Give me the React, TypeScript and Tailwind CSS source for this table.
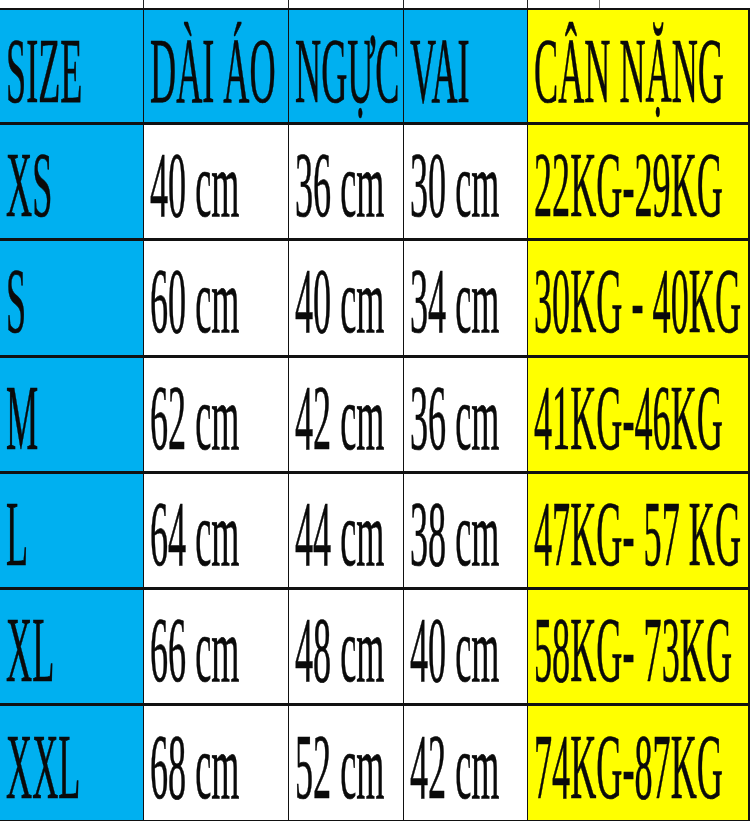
const BLUE = "bg-[#00b0f0]";
const YELLOW = "bg-[#ffff00]";

const rows = [
  { size: "XS", dai: "40 cm", nguc: "36 cm", vai: "30 cm", kg: "22KG-29KG" },
  { size: "S", dai: "60 cm", nguc: "40 cm", vai: "34 cm", kg: "30KG - 40KG" },
  { size: "M", dai: "62 cm", nguc: "42 cm", vai: "36 cm", kg: "41KG-46KG" },
  { size: "L", dai: "64 cm", nguc: "44 cm", vai: "38 cm", kg: "47KG- 57 KG" },
  { size: "XL", dai: "66 cm", nguc: "48 cm", vai: "40 cm", kg: "58KG- 73KG" },
  { size: "XXL", dai: "68 cm", nguc: "52 cm", vai: "42 cm", kg: "74KG-87KG" },
];

const gridCols = "grid grid-cols-[144px_145px_115px_124px_222px]";

function Cell({
  text,
  bg,
  last,
  head,
}: {
  text: string;
  bg: string;
  last?: boolean;
  head?: boolean;
}) {
  return (
    <div
      className={`${bg} ${last ? "border-r-2" : "border-r"} ${
        head ? "pt-[8px]" : "pt-[5px]"
      } border-[#111] flex items-center pl-[6px] overflow-hidden`}
    >
      <span className="inline-block origin-left scale-x-[0.385] whitespace-nowrap text-[94px] leading-none text-[#0a0a0a] [-webkit-text-stroke:0.7px_#0a0a0a]">
        {text}
      </span>
    </div>
  );
}

export default function App() {
  return (
    <div className="w-[750px] h-[821px] overflow-hidden bg-white font-['Liberation_Serif','Times_New_Roman',serif]">
      {/* top sliver of the previous table */}
      <div className="grid grid-cols-[144px_145px_115px_124px_72px_150px] h-[8px]">
        <div className="border-r border-[#222]" />
        <div className="border-r border-[#222]" />
        <div className="border-r border-[#222]" />
        <div className="border-r border-[#222]" />
        <div className="border-r border-[#777]" />
        <div />
      </div>

      <div className="border-t-2 border-[#111]">
        {/* header */}
        <div className={`${gridCols} h-[115px] border-b-[3px] border-[#111]`}>
          <Cell text="SIZE" bg={BLUE} head />
          <Cell text="DÀI ÁO" bg={BLUE} head />
          <Cell text="NGỰC" bg={BLUE} head />
          <Cell text="VAI" bg={BLUE} head />
          <Cell text="CÂN NẶNG" bg={YELLOW} last head />
        </div>

        {rows.map((r) => (
          <div key={r.size} className={`${gridCols} h-[116.3px] border-b-[3px] border-[#111]`}>
            <Cell text={r.size} bg={BLUE} />
            <Cell text={r.dai} bg="bg-white" />
            <Cell text={r.nguc} bg="bg-white" />
            <Cell text={r.vai} bg="bg-white" />
            <Cell text={r.kg} bg={YELLOW} last />
          </div>
        ))}
      </div>
    </div>
  );
}
